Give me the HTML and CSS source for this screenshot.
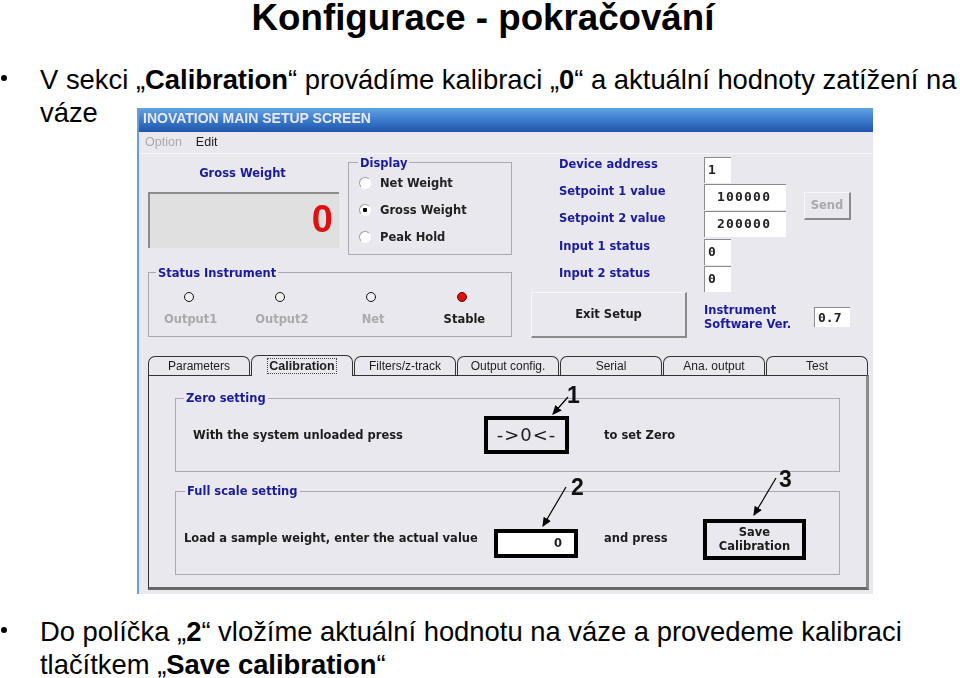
FILE: index.html
```html
<!DOCTYPE html>
<html lang="cs">
  <head>
    <meta charset="UTF-8" />
    <meta name="viewport" content="width=device-width, initial-scale=1.0" />
    <title>Konfigurace - pokračování</title>
    <link rel="stylesheet" href="styles.css">
  </head>
  <body>
    <h1 class="slide-title">Konfigurace - pokračování</h1>
    <p class="point">V sekci „<b>Calibration</b>“ provádíme kalibraci „<b>0</b>“ a aktuální hodnoty zatížení na váze</p>

    <div class="window">
      <div class="titlebar">INOVATION MAIN SETUP SCREEN</div>
      <div class="menubar">
        <span class="menu-off">Option</span>
        <span>Edit</span>
      </div>

      <div class="top">
        <div class="top-left">
          <div class="top-left-row">
            <div class="gross">
              <div class="gross-label blue">Gross Weight</div>
              <div class="gross-value">0</div>
            </div>
            <div class="group display-group">
              <span class="legend blue">Display</span>
              <div class="radio"><i></i>Net Weight</div>
              <div class="radio"><i class="on"></i>Gross Weight</div>
              <div class="radio"><i></i>Peak Hold</div>
            </div>
          </div>
          <div class="group status-group">
            <span class="legend blue">Status Instrument</span>
            <div class="lamp"><i></i>Output1</div>
            <div class="lamp"><i></i>Output2</div>
            <div class="lamp"><i></i>Net</div>
            <div class="lamp lamp-on"><i></i>Stable</div>
          </div>
        </div>

        <div class="top-right">
          <div class="fields-row">
            <div class="fields">
              <div class="field"><label class="blue">Device address</label><span class="box">1</span></div>
              <div class="field"><label class="blue">Setpoint 1 value</label><span class="box box-wide">100000</span></div>
              <div class="field"><label class="blue">Setpoint 2 value</label><span class="box box-wide">200000</span></div>
              <div class="field"><label class="blue">Input 1 status</label><span class="box">0</span></div>
              <div class="field"><label class="blue">Input 2 status</label><span class="box">0</span></div>
            </div>
            <div class="send">Send</div>
          </div>
          <div class="exit-row">
            <div class="exit">Exit Setup</div>
            <div class="version blue">Instrument<br />Software Ver.</div>
            <span class="box box-ver">0.7</span>
          </div>
        </div>
      </div>

      <div class="tabs">
        <div class="tab">Parameters</div>
        <div class="tab tab-active"><span>Calibration</span></div>
        <div class="tab">Filters/z-track</div>
        <div class="tab">Output config.</div>
        <div class="tab">Serial</div>
        <div class="tab">Ana. output</div>
        <div class="tab">Test</div>
      </div>
      <div class="panel">
        <div class="group zero-group">
          <span class="legend blue">Zero setting</span>
          <span class="zero-text">With the system unloaded press</span>
          <div class="black-btn zero-btn">-&gt;0&lt;-</div>
          <span>to set Zero</span>
        </div>
        <div class="group scale-group">
          <span class="legend blue">Full scale setting</span>
          <span class="scale-text">Load a sample weight, enter the actual value</span>
          <div class="black-btn scale-input">0</div>
          <span class="scale-press">and press</span>
          <div class="black-btn save-btn">Save<br />Calibration</div>
        </div>
      </div>

      <!-- callouts drawn over the screenshot -->
      <svg class="callouts" width="736" height="486" viewBox="0 0 736 486">
        <defs>
          <marker id="head" markerWidth="9" markerHeight="9" refX="7" refY="3.5" orient="auto">
            <path d="M0 0L8 3.5L0 7z" fill="#000" />
          </marker>
        </defs>
        <path d="M431 289L416 306" stroke="#000" stroke-width="1.2" marker-end="url(#head)" />
        <path d="M429 379L406 418" stroke="#000" stroke-width="1.2" marker-end="url(#head)" />
        <path d="M639 370L617 407" stroke="#000" stroke-width="1.2" marker-end="url(#head)" />
      </svg>
      <span class="num num-1">1</span>
      <span class="num num-2">2</span>
      <span class="num num-3">3</span>
    </div>

    <p class="point point-last">Do políčka „<b>2</b>“ vložíme aktuální hodnotu na váze a provedeme kalibraci tlačítkem „<b>Save calibration</b>“</p>
  </body>
</html>
```

FILE: styles.css
```css
* {
  margin: 0;
  padding: 0;
  box-sizing: border-box;
}

html,
body {
  height: 100%;
  overflow: hidden;
}

body {
  background: #fff;
  color: #000;
  font-family: "Liberation Sans", Arial, sans-serif;
}

.slide-title {
  height: 36px;
  margin-left: 6px;
  font-size: 36.7px;
  line-height: 36px;
  font-weight: bold;
  text-align: center;
}

.point {
  position: relative;
  margin-top: 27px;
  padding-left: 40px;
  font-size: 27.4px;
  line-height: 33px;
}

.point::before {
  content: "";
  position: absolute;
  left: 1px;
  top: 12px;
  width: 6px;
  height: 6px;
  border-radius: 50%;
  background: #000;
}

.point-last {
  margin-top: 21px;
}

/* screenshot of the setup program */
.window {
  position: relative;
  width: 736px;
  height: 486px;
  margin: -21px 0 0 137px;
  background: #e9e8ee;
  border-left: 2px solid #6f9bd0;
  font-family: "DejaVu Sans", sans-serif;
  font-size: 11.5px;
  font-weight: bold;
  color: #1c1c1c;
  filter: blur(0.35px);
}

.blue {
  color: #1a1a9c;
}

.titlebar {
  height: 24px;
  padding: 2px 0 0 4px;
  background: linear-gradient(#63a3e4, #3f7fd0 45%, #1f55a8);
  color: #e8e8f0;
  font-family: "Liberation Sans", sans-serif;
  font-size: 14px;
  line-height: 17px;
  white-space: nowrap;
}

.menubar {
  display: flex;
  gap: 14px;
  height: 22px;
  padding: 3px 0 0 6px;
  border-bottom: 1px solid #f6f6f9;
  font-family: "Liberation Sans", sans-serif;
  font-size: 12.5px;
  font-weight: normal;
  line-height: 15px;
}

.menu-off {
  color: #a9a9ae;
}

.top {
  display: flex;
  height: 202px;
  padding: 8px 0 0 9px;
}

.top-left {
  width: 364px;
}

.top-left-row {
  display: flex;
}

.gross {
  width: 191px;
  margin-right: 9px;
}

.gross-label {
  height: 30px;
  padding-top: 4px;
  padding-right: 2px;
  text-align: center;
  line-height: 14px;
}

.gross-value {
  height: 56px;
  padding-right: 6px;
  background: #e0e0e0;
  border-top: 2px solid #8b8b8b;
  border-left: 2px solid #8b8b8b;
  color: #e01010;
  font-family: "Liberation Sans", sans-serif;
  font-size: 38px;
  line-height: 50px;
  text-align: right;
}

.group {
  position: relative;
  border: 1px solid #a9a9b0;
}

.legend {
  position: absolute;
  top: -6px;
  left: 9px;
  padding: 0 2px;
  background: #e9e8ee;
  line-height: 12px;
  white-space: nowrap;
}

.display-group {
  width: 164px;
  height: 93px;
  padding-top: 6px;
}

.radio {
  display: flex;
  align-items: center;
  height: 27.3px;
  padding-left: 10px;
  color: #222;
}

.radio i {
  width: 12px;
  height: 12px;
  margin-right: 9px;
  border-radius: 50%;
  background: #fff;
  border: 1px solid #a0a0a0;
  border-right-color: #fff;
  border-bottom-color: #fff;
}

.radio i.on {
  background: radial-gradient(circle, #000 0 2px, #fff 2.5px);
}

.status-group {
  display: flex;
  width: 364px;
  height: 65px;
  margin-top: 17px;
  padding-top: 19px;
}

.status-group .legend {
  left: 7px;
}

.lamp {
  display: flex;
  flex-direction: column;
  align-items: center;
  width: 91.4px;
  margin-left: -1px;
  margin-right: 1px;
  color: #a9a9ae;
}

.lamp i {
  width: 10px;
  height: 10px;
  margin: 0 4px 10px 0;
  border-radius: 50%;
  background: #f0f0f0;
  border: 1px solid #111;
}

.lamp:first-of-type {
  margin-left: -4px;
}

.lamp-on {
  color: #1c1c1c;
}

.lamp-on i {
  background: #e01010;
  border-color: #600;
}

.top-right {
  width: 322px;
  margin-left: 19px;
}

.fields-row {
  display: flex;
  height: 136px;
  margin-top: -6px;
  padding-left: 28px;
}

.fields {
  width: 245px;
}

.field {
  display: flex;
  align-items: center;
  height: 27.4px;
}

.field label {
  width: 145px;
  margin-top: -12px;
}

.box {
  display: block;
  width: 27px;
  height: 26px;
  padding-left: 3px;
  background: #fff;
  border-top: 1px solid #8b8b8b;
  border-left: 1px solid #8b8b8b;
  font-family: "DejaVu Sans Mono", monospace;
  font-size: 13px;
  line-height: 24px;
  color: #222;
}

.box-wide {
  width: 82px;
  padding-left: 12px;
  letter-spacing: 1.2px;
}

.send {
  width: 47px;
  height: 28px;
  margin-top: 36px;
  background: #e9e8ee;
  border: 1px solid #f7f7fa;
  border-right: 2px solid #8b8b8b;
  border-bottom: 2px solid #8b8b8b;
  color: #a9a9ae;
  line-height: 24px;
  text-align: center;
}

.exit-row {
  display: flex;
  align-items: center;
  height: 46px;
}

.exit {
  width: 156px;
  height: 46px;
  margin-right: 17px;
  background: #e9e8ee;
  border: 1px solid #f7f7fa;
  border-right: 2px solid #8b8b8b;
  border-bottom: 2px solid #8b8b8b;
  line-height: 42px;
  text-align: center;
}

.version {
  width: 110px;
  margin-top: 3px;
  line-height: 14px;
}

.box-ver {
  width: 36px;
  height: 20px;
  margin-top: 3px;
  line-height: 19px;
}

.tabs {
  display: flex;
  gap: 1px;
  height: 19px;
  padding-left: 9px;
  font-family: "Liberation Sans", sans-serif;
  font-size: 12px;
  font-weight: normal;
}

.tab {
  width: 102px;
  height: 20px;
  border: 1px solid #333;
  border-bottom: 0;
  border-radius: 7px 7px 0 0;
  background: #e9e8ee;
  line-height: 18px;
  text-align: center;
}

.tab-active {
  position: relative;
  z-index: 1;
  height: 21px;
  margin-top: -1px;
  font-size: 12.5px;
  font-weight: bold;
  line-height: 20px;
}

.tab-active span {
  border: 1px dotted #444;
  padding: 0 1px;
}

.panel {
  position: relative;
  width: 721px;
  height: 215px;
  margin-left: 9px;
  padding: 22px 0 0 26px;
  border: 1px solid #333;
  border-right: 3px solid #8b8b8b;
  border-bottom: 3px solid #666;
}

.zero-group,
.scale-group {
  display: flex;
  align-items: center;
  width: 665px;
}

.zero-group {
  height: 74px;
}

.panel .legend {
  top: -7px;
}

.zero-group .legend {
  left: 8px;
}

.zero-text {
  width: 291px;
  margin-left: 17px;
}

.scale-group {
  height: 84px;
  margin-top: 19px;
}

.scale-text {
  width: 310px;
  margin-left: 8px;
  margin-top: 9px;
}

.black-btn {
  background: #e9e8ee;
  border: 4px solid #000;
  text-align: center;
}

.zero-btn {
  width: 85px;
  height: 38px;
  margin-right: 35px;
  font-family: "DejaVu Sans", sans-serif;
  font-size: 18px;
  font-weight: normal;
  letter-spacing: 1px;
  line-height: 30px;
}

.scale-input {
  width: 84px;
  height: 29px;
  margin: 21px 26px 0 0;
  padding-right: 12px;
  background: #fff;
  line-height: 21px;
  text-align: right;
}

.scale-press {
  width: 99px;
  margin-top: 9px;
}

.save-btn {
  width: 103px;
  height: 41px;
  margin-top: 12px;
  line-height: 14px;
  padding-top: 2px;
}

.callouts {
  position: absolute;
  top: 0;
  left: -2px;
  pointer-events: none;
}

.num {
  position: absolute;
  font-family: "Liberation Sans", sans-serif;
  font-size: 23px;
  line-height: 24px;
  color: #111;
}

.num-1 {
  top: 275px;
  left: 428px;
}

.num-2 {
  top: 367px;
  left: 432px;
}

.num-3 {
  top: 359px;
  left: 640px;
}
```
